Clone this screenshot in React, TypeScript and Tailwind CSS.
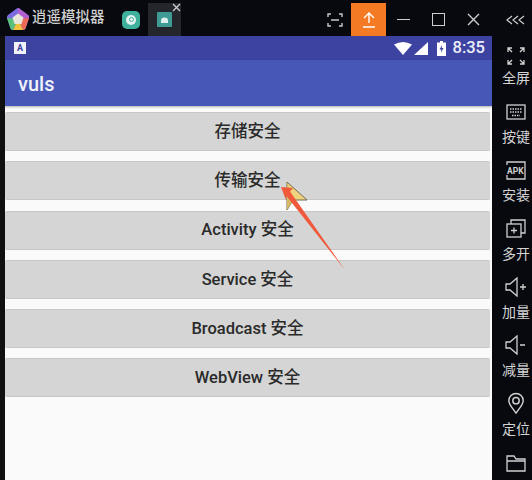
const FONT = '"Roboto", "Noto Sans CJK SC", sans-serif';

const BUTTONS = ['存储安全', '传输安全', 'Activity 安全', 'Service 安全', 'Broadcast 安全', 'WebView 安全'];

function Logo() {
  return (
    <svg width="24" height="24" viewBox="0 0 24 24">
      <path d="M12 1 Q13 1 14 2 L22 8 Q23.5 9 23 11 L20 20 Q19.5 23 17 23 L7 23 Q4.5 23 4 20 L1 11 Q0.5 9 2 8 L10 2 Q11 1 12 1 Z" fill="#7a6be0" />
      <path d="M12 1 Q13 1 14 2 L22 8 Q23.5 9 23 11 L12 12 Z" fill="#b25fd0" />
      <path d="M23 11 L20 20 Q19.5 23 17 23 L12 12 Z" fill="#ee6a56" />
      <path d="M17 23 L7 23 L12 12 Z" fill="#f2c23c" />
      <path d="M7 23 Q4.5 23 4 20 L1 11 L12 12 Z" fill="#58c07a" />
      <path d="M12 6.5 L17.5 10.5 L15.5 17 L8.5 17 L6.5 10.5 Z" fill="#e9e6dc" />
    </svg>
  );
}

function TitleBar() {
  return (
    <div className="flex h-[36px] items-stretch bg-[#07090e] pt-[3px]">
      <div className="flex w-[117px] items-center pb-[2px] pl-[6px]">
        <Logo />
        <span className="ml-[2px] text-[14.5px] font-medium leading-none text-[#d0d0d0]">逍遥模拟器</span>
      </div>
      <div className="flex w-[31px] items-center justify-start pl-[5px]">
        <div className="flex h-[18px] w-[18px] items-center justify-center rounded-[5px] bg-[#3fb09c]">
          <div className="flex h-[10px] w-[10px] items-center justify-center rounded-full bg-[#e6f2ef]">
            <div className="h-[5px] w-[5px] rounded-full border border-[#3fb09c]" />
          </div>
        </div>
      </div>
      <div className="relative flex w-[33px] items-center justify-center bg-[#23262b]">
        <svg width="15" height="15" viewBox="0 0 15 15">
          <rect width="15" height="15" rx="1" fill="#3f9c94" />
          <path d="M4 11 V8.5 Q4 5.5 7.5 5.5 Q11 5.5 11 8.5 V11 Z" fill="#dfeeee" />
        </svg>
        <svg className="absolute right-0 top-0" width="9" height="9" viewBox="0 0 9 9">
          <path d="M1 1 L8 8 M8 1 L1 8" stroke="#d0d2d4" strokeWidth="1.2" />
        </svg>
      </div>
      <div className="flex flex-1 items-center justify-end pr-[8px]">
        <svg width="16" height="14" viewBox="0 0 16 14" fill="none" stroke="#c8c8c8" strokeWidth="1.4">
          <path d="M1 4 V1 H4 M12 1 H15 V4 M15 10 V13 H12 M4 13 H1 V10 M4 7 H12" />
        </svg>
      </div>
      <div className="flex w-[35px] items-center justify-center bg-[#f47a24]">
        <svg width="14" height="18" viewBox="0 0 14 18" fill="none" stroke="#ffffff" strokeWidth="1.4">
          <path d="M7 12 V2 M2 7 L7 2 L12 7 M1 16 H13" />
        </svg>
      </div>
      <div className="flex w-[35px] items-center justify-center">
        <div className="h-[1.5px] w-[13px] bg-[#cfcfcf]" />
      </div>
      <div className="flex w-[35px] items-center justify-center">
        <div className="h-[13px] w-[13px] border-[1.5px] border-[#cfcfcf]" />
      </div>
      <div className="flex w-[35px] items-center justify-center">
        <svg width="13" height="13" viewBox="0 0 13 13" stroke="#cfcfcf" strokeWidth="1.4">
          <path d="M1 1 L12 12 M12 1 L1 12" />
        </svg>
      </div>
      <div className="flex w-[41px] items-center justify-end pr-[6px]">
        <svg width="20" height="10" viewBox="0 0 20 10" fill="none" stroke="#cfcfcf" strokeWidth="1.2">
          <path d="M6 1 L1 5 L6 9 M12 1 L7 5 L12 9 M18 1 L13 5 L18 9" />
        </svg>
      </div>
    </div>
  );
}

function StatusBar() {
  return (
    <div className="flex h-[24px] items-center bg-[#3c43a1] pl-[9px] pr-[7px]">
      <div className="flex h-[12px] w-[12px] items-center justify-center bg-[#f2f3fa] text-[9px] font-bold leading-none text-[#3c43a1]">
        A
      </div>
      <div className="flex-1" />
      <svg width="18" height="13" viewBox="0 0 18 13">
        <path d="M0 2.5 Q9 -2.5 18 2.5 L9 13 Z" fill="#ffffff" />
      </svg>
      <svg className="ml-[2px]" width="14" height="13" viewBox="0 0 14 13">
        <path d="M14 0 V13 H0 Z" fill="#ffffff" />
      </svg>
      <svg className="ml-[9px]" width="9" height="15" viewBox="0 0 9 15">
        <path d="M3 0 H6 V1.5 H9 V15 H0 V1.5 H3 Z" fill="#ffffff" />
        <path d="M5 4 L2.5 8.5 H4.3 L3.8 12 L6.5 7 H4.7 Z" fill="#3c43a1" />
      </svg>
      <span className="ml-[7px] text-[16.5px] font-medium leading-none text-[#eceefa]">8:35</span>
    </div>
  );
}

function MenuButton({ label }: { label: string }) {
  return (
    <div className="flex h-[39px] items-center justify-center rounded-[2px] border-y border-y-[#c6c7c6] bg-[#d4d5d4] pt-[1px] text-[16.5px] font-medium text-[#2a2a2a]">
      {label}
    </div>
  );
}

// pointer and the red annotation arrow sit on top of the buttons
function Annotation() {
  return (
    <svg className="absolute left-[280px] top-[180px]" width="70" height="96" viewBox="0 0 70 96">
      <path d="M7 2 L27 20 L13 20 L7 30 Z" fill="#efd27c" stroke="#6f6a50" strokeWidth="1" />
      <path d="M7 2 L13 20 L7 30 Z" fill="#d6ba62" />
      <path d="M1 7 L13 8 L10 11.5 L65 90 L6.5 16 L6 20 Z" fill="#f0593b" />
    </svg>
  );
}

function Phone() {
  return (
    <div className="flex flex-1 flex-col bg-[#fafafa]">
      <StatusBar />
      <div className="flex h-[46px] items-center bg-[#4757b8] pl-[13px] pt-[2px] text-[20px] font-medium text-[#eef0fa] shadow-[0_1px_2px_rgba(0,0,0,0.3)]">
        vuls
      </div>
      <div className="flex flex-col gap-[10.3px] pr-[2px] pt-[6px]">
        {BUTTONS.map((label) => (
          <MenuButton key={label} label={label} />
        ))}
      </div>
    </div>
  );
}

function SideItem({ icon, label }: { icon: React.ReactNode; label: string }) {
  return (
    <div className="flex h-[58.4px] shrink-0 flex-col items-center justify-end">
      <div className="flex h-[30px] items-center justify-center">{icon}</div>
      <span className="text-[14px] leading-[20px] text-[#d4d4d4]">{label}</span>
    </div>
  );
}

function Sidebar() {
  const s = { fill: 'none', stroke: '#d0d0d0', strokeWidth: 1.3 };
  return (
    <div className="flex w-[40px] flex-col overflow-hidden bg-[#07090e] pl-[8px]">
      <div className="-mt-[6px]">
        <SideItem
          label="全屏"
          icon={
            <svg className="mt-[5px]" width="18" height="18" viewBox="0 0 18 18" {...s}>
              <path d="M1 5 V1 H5 M1 1 L5 5 M13 1 H17 V5 M17 1 L13 5 M1 13 V17 H5 M1 17 L5 13 M13 17 H17 V13 M17 17 L13 13" />
            </svg>
          }
        />
      </div>
      <SideItem
        label="按键"
        icon={
          <svg width="20" height="16" viewBox="0 0 20 16" {...s}>
            <rect x="1" y="1" width="18" height="14" />
            <path d="M4 5 H16 M4 8 H16 M6 11.5 H14" strokeDasharray="1.5 1" />
          </svg>
        }
      />
      <SideItem
        label="安装"
        icon={
          <svg width="20" height="19" viewBox="0 0 20 19" {...s}>
            <path d="M1 4 V1 H19 V18 H1 V14" />
            <text x="1" y="13" fontSize="8.5" fontWeight="700" fill="#d0d0d0" stroke="none" fontFamily="Roboto">
              APK
            </text>
          </svg>
        }
      />
      <SideItem
        label="多开"
        icon={
          <svg width="20" height="19" viewBox="0 0 20 19" {...s}>
            <path d="M5 5 V1 H19 V14 H15" />
            <rect x="1" y="5" width="14" height="13" />
            <path d="M5 11.5 H11 M8 8.5 V14.5" />
          </svg>
        }
      />
      <SideItem
        label="加量"
        icon={
          <svg width="22" height="20" viewBox="0 0 22 20" {...s}>
            <path d="M1 7 H5 L12 1 V19 L5 13 H1 Z M15 10 H21 M18 7 V13" />
          </svg>
        }
      />
      <SideItem
        label="减量"
        icon={
          <svg width="22" height="20" viewBox="0 0 22 20" {...s}>
            <path d="M1 7 H5 L12 1 V19 L5 13 H1 Z M15 10 H20" />
          </svg>
        }
      />
      <SideItem
        label="定位"
        icon={
          <svg width="16" height="25" viewBox="0 0 20 26" fill="none" stroke="#d0d0d0" strokeWidth={1.8}>
            <path d="M10 25 C5 18 1 14 1 9.5 A9 9 0 0 1 19 9.5 C19 14 15 18 10 25 Z" />
            <circle cx="10" cy="9.5" r="4" />
          </svg>
        }
      />
      <div className="flex h-[33px] shrink-0 items-end justify-center">
        <svg width="20" height="17" viewBox="0 0 20 17" {...s}>
          <path d="M1 1 H8 L10 4 H19 V16 H1 Z M1 6 H19" />
        </svg>
      </div>
    </div>
  );
}

export default function App() {
  return (
    <div className="relative h-[480px] w-[532px] overflow-hidden bg-[#07090e]" style={{ fontFamily: FONT }}>
      <TitleBar />
      <div className="flex h-[444px]">
        <div className="w-[5px] bg-[#101010]" />
        <Phone />
        <Sidebar />
      </div>
      <Annotation />
    </div>
  );
}
